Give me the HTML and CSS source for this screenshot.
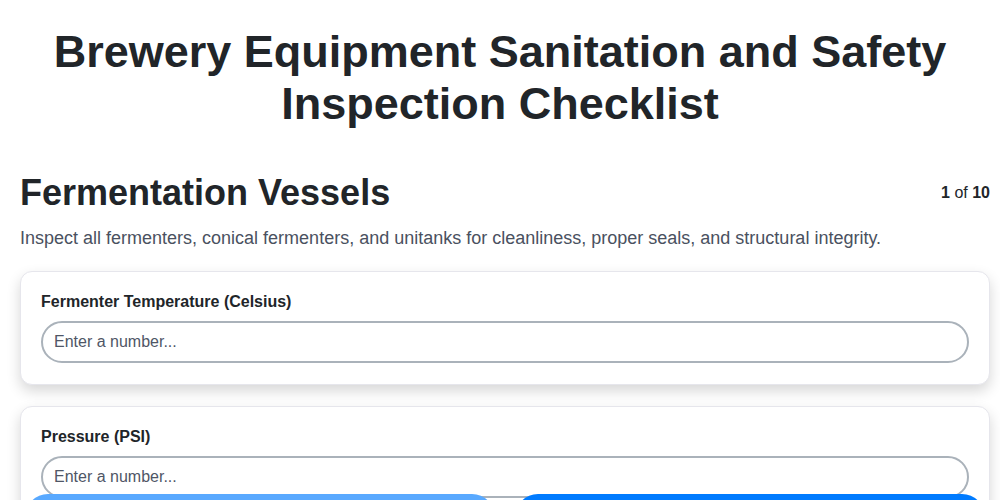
FILE: index.html
```html
<!DOCTYPE html>
<html lang="en">

<head>
    <meta charset="UTF-8">
    <meta name="viewport" content="width=device-width, initial-scale=1.0">
    <title>Brewery Inspection Checklist</title>
    <link rel="stylesheet" href="styles.css">
</head>

<body>
    <h1 class="title">Brewery Equipment Sanitation and Safety Inspection Checklist</h1>

    <div class="page">
        <div class="section-head">
            <h2 class="section-title">Fermentation Vessels</h2>
            <div class="counter"><b>1</b> of <b>10</b></div>
        </div>
        <p class="section-desc">Inspect all fermenters, conical fermenters, and unitanks for cleanliness, proper seals, and structural integrity.</p>

        <div class="card">
            <label class="field-label" for="temp">Fermenter Temperature (Celsius)</label>
            <input class="field" type="number" id="temp" placeholder="Enter a number...">
        </div>

        <div class="card">
            <label class="field-label" for="psi">Pressure (PSI)</label>
            <input class="field" type="number" id="psi" placeholder="Enter a number...">
        </div>
    </div>

    <div class="nav">
        <button class="btn prev" disabled>Previous</button>
        <button class="btn next">Next</button>
    </div>
</body>

</html>
```

FILE: styles.css
```css
body {
    margin: 0;
    font-family: "Liberation Sans", Arial, sans-serif;
    color: #212529;
    background-color: white;
}

.title {
    text-align: center;
    font-size: 45px;
    line-height: 52px;
    margin: 0;
    padding: 26px 40px 0;
}

.page {
    padding: 0 10px 0 20px;
}

.section-head {
    display: flex;
    justify-content: space-between;
    align-items: center;
    margin-top: 41px;
}

.section-title {
    font-size: 36px;
    line-height: 1.2;
    margin: 0;
}

.counter {
    font-size: 16px;
    color: #212529;
}

.section-desc {
    font-size: 18px;
    color: #4a5160;
    margin: 14px 0 22px;
}

.card {
    background-color: white;
    border: 1px solid #e6e6ec;
    border-radius: 12px;
    padding: 21px 20px;
    margin-bottom: 21px;
    box-shadow: 0 6px 14px rgba(0, 0, 0, 0.16);
}

.field-label {
    display: block;
    font-weight: bold;
    font-size: 16px;
    margin-bottom: 10px;
}

.field {
    display: block;
    width: 100%;
    box-sizing: border-box;
    height: 42px;
    padding: 0 11px;
    border: 2px solid #aab2ba;
    border-radius: 21px;
    font-family: "Liberation Sans", Arial, sans-serif;
    font-size: 16px;
    color: #212529;
}

.field::placeholder {
    color: #4f5666;
}

/* fixed button bar at the bottom */
.nav {
    position: fixed;
    left: 0;
    right: 0;
    top: 494px;
    display: flex;
    gap: 20px;
    padding: 0 15px 0 25px;
}

.btn {
    flex: 1;
    height: 46px;
    padding-top: 14px;
    border: none;
    border-radius: 23px;
    background-color: #007bff;
    color: white;
    font-size: 16px;
    font-weight: bold;
}

.prev {
    background-color: #59a9ff;
}
```
